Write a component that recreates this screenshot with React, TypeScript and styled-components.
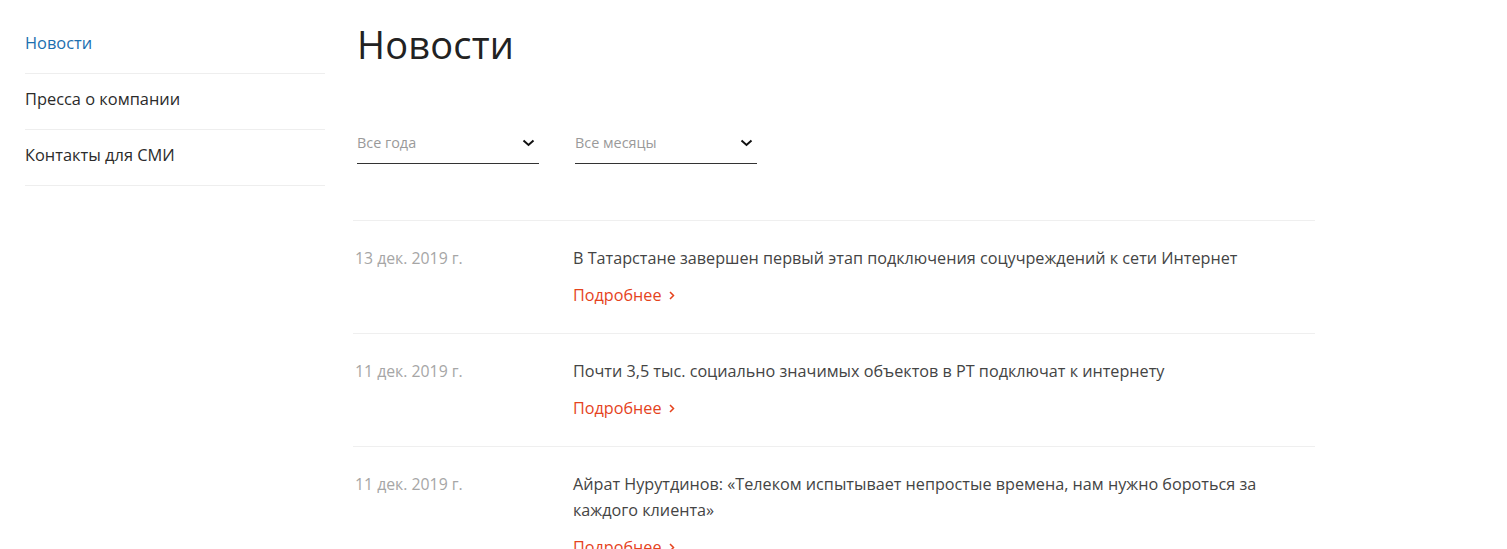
import React from "react";
import styled, { createGlobalStyle } from "styled-components";

const Global = createGlobalStyle`
  body {
    margin: 0;
    background: #ffffff;
    font-family: "Open Sans", "Noto Sans", sans-serif;
    color: #333;
  }
`;

const Page = styled.div`
  display: flex;
  align-items: flex-start;
  padding-left: 25px;
`;

const Sidebar = styled.nav`
  width: 300px;
  flex: none;
  display: flex;
  flex-direction: column;
  padding-top: 18px;
`;

const NavItem = styled.a<{ $active?: boolean }>`
  display: block;
  padding: 13px 0 18px;
  font-size: 16.4px;
  line-height: 24px;
  color: ${(p) => (p.$active ? "#1c6fb0" : "#2b2b2b")};
  text-decoration: none;
  border-bottom: 1px solid #eeeeee;
`;

const Main = styled.main`
  margin-left: 28px;
  width: 962px;
  flex: none;
`;

const Title = styled.h1`
  margin: 21px 0 0 4px;
  font-size: 38px;
  line-height: 46px;
  font-weight: 400;
  color: #222;
  letter-spacing: 0.2px;
`;

const Filters = styled.div`
  display: flex;
  gap: 36px;
  margin-top: 57px;
  padding-left: 4px;
`;

const Select = styled.div`
  width: 182px;
  height: 40px;
  box-sizing: border-box;
  border-bottom: 1px solid #333;
  display: flex;
  align-items: center;
  justify-content: space-between;
  padding-right: 4px;
  padding-bottom: 2px;
  font-size: 14.4px;
  color: #9a9a9a;
`;

const List = styled.div`
  margin-top: 56px;
  display: flex;
  flex-direction: column;
`;

const Row = styled.div`
  display: grid;
  grid-template-columns: 218px 1fr;
  padding: 24px 0 25px 2px;
  border-top: 1px solid #efefef;
`;

const DateText = styled.div`
  font-size: 15.8px;
  line-height: 26px;
  color: #a6a6a6;
`;

const Body = styled.div`
  display: flex;
  flex-direction: column;
  gap: 11px;
`;

const Headline = styled.div`
  font-size: 16.2px;
  line-height: 26px;
  color: #444;
  max-width: 710px;
`;

const More = styled.a`
  font-size: 16.2px;
  line-height: 26px;
  color: #e5431d;
  text-decoration: none;
  display: inline-flex;
  align-items: center;
  gap: 7px;
`;

const Chevron = () => (
  <svg width="13" height="8" viewBox="0 0 13 8" fill="none">
    <path d="M1.5 1.5 L6.5 6 L11.5 1.5" stroke="#111" strokeWidth="2" />
  </svg>
);

const SmallArrow = () => (
  <svg width="6" height="9" viewBox="0 0 6 9" fill="none">
    <path d="M1 1 L4.5 4.5 L1 8" stroke="#e5431d" strokeWidth="1.5" />
  </svg>
);

const news = [
  {
    date: "13 дек. 2019 г.",
    title:
      "В Татарстане завершен первый этап подключения соцучреждений к сети Интернет",
  },
  {
    date: "11 дек. 2019 г.",
    title:
      "Почти 3,5 тыс. социально значимых объектов в РТ подключат к интернету",
  },
  {
    date: "11 дек. 2019 г.",
    title:
      "Айрат Нурутдинов: «Телеком испытывает непростые времена, нам нужно бороться за каждого клиента»",
  },
];

export default function App() {
  return (
    <>
      <Global />
      <Page>
        <Sidebar>
          <NavItem $active>Новости</NavItem>
          <NavItem>Пресса о компании</NavItem>
          <NavItem>Контакты для СМИ</NavItem>
        </Sidebar>
        <Main>
          <Title>Новости</Title>
          <Filters>
            <Select>
              <span>Все года</span>
              <Chevron />
            </Select>
            <Select>
              <span>Все месяцы</span>
              <Chevron />
            </Select>
          </Filters>
          <List>
            {news.map((n, i) => (
              <Row key={i}>
                <DateText>{n.date}</DateText>
                <Body>
                  <Headline>{n.title}</Headline>
                  <More>
                    Подробнее <SmallArrow />
                  </More>
                </Body>
              </Row>
            ))}
          </List>
        </Main>
      </Page>
    </>
  );
}
